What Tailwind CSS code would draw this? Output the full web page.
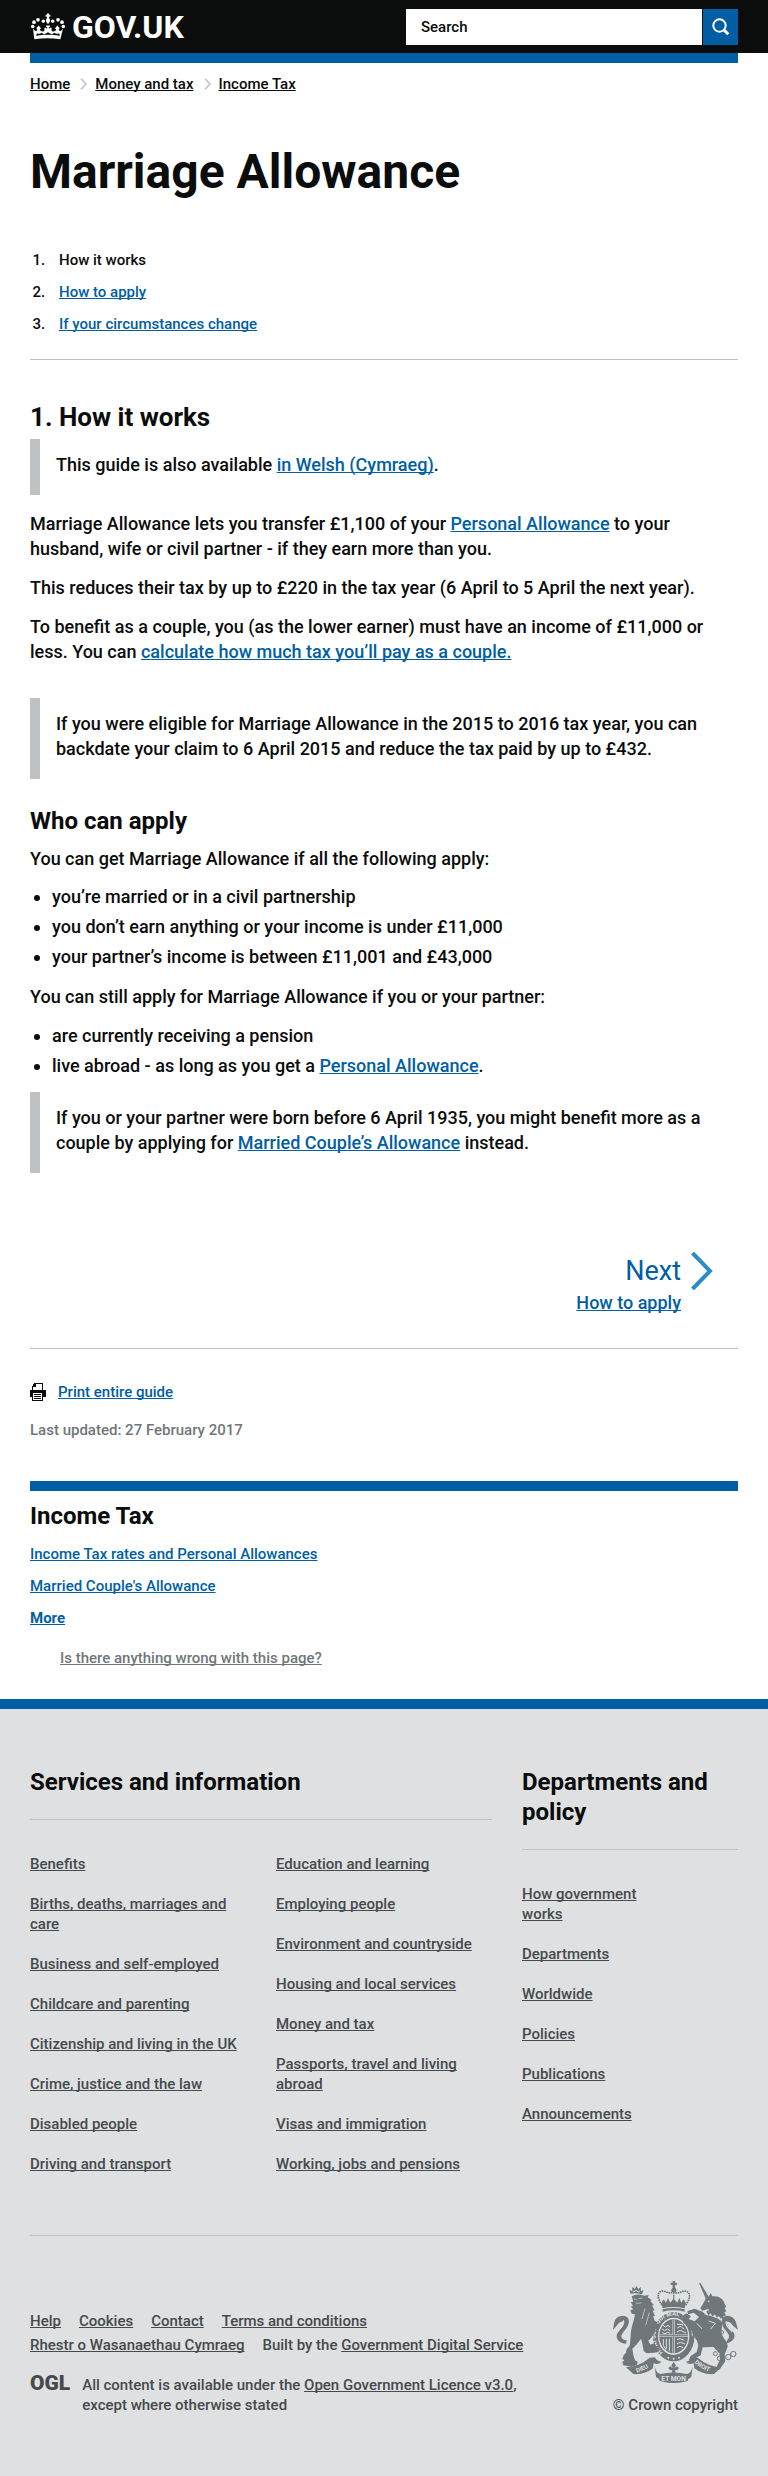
<!DOCTYPE html>
<html lang="en">
<head>
<meta charset="utf-8">
<meta name="viewport" content="width=device-width, initial-scale=1">
<title>Marriage Allowance - GOV.UK</title>
<script src="https://cdn.jsdelivr.net/npm/@tailwindcss/browser@4"></script>
</head>
<body class="bg-white font-['Roboto',sans-serif] text-[15px] font-medium leading-5 text-[#0b0c0c] [text-decoration-skip-ink:none]">

<header>
  <div class="bg-[#0b0c0c]">
    <div class="flex h-[53px] items-center justify-between px-[30px]">
      <a href="#" class="flex items-center gap-[6px] text-white" aria-label="GOV.UK home">
        <svg class="h-[27px] w-9" viewBox="90 36 108 80" fill="#fff" aria-hidden="true">
          <path d="M141 37h6v4h4v6h-4v4c4 3 4 8 1 12l-1 4h-6l-1-4c-3-4-3-9 1-12v-4h-4v-6h4z"/>
          <circle cx="130" cy="60" r="5"/><circle cx="158" cy="60" r="5"/>
          <circle cx="114" cy="56" r="5.500"/><circle cx="174" cy="56" r="5.500"/>
          <circle cx="102" cy="63" r="5.500"/><circle cx="186" cy="63" r="5.500"/>
          <circle cx="98" cy="76" r="5.500"/><circle cx="190" cy="76" r="5.500"/>
          <path fill-rule="evenodd" d="M99 82c7 9 10 10 13 4l-3-5 7-8 7 8-4 5c4 6 12 6 15 1-2-4-1-7 2-8l5 4 1-4-4-3v-3h12v3l-4 3 1 4 5-4c3 1 4 4 2 8 3 5 11 5 15-1l-4-5 7-8 7 8-3 5c3 6 6 5 13-4l-8 32q-39-5-78 0zM111 96l-3 8q36-6 72 0l-3-8q-7 4-14-1l-7 5-12-7-12 7-7-5q-7 5-14 1z"/>
        </svg>
        <span class="text-[32px] font-bold leading-none">GOV.UK</span>
      </a>
      <form class="flex h-9 w-[332px] gap-px" role="search">
        <input type="search" aria-label="Search" placeholder="Search" class="min-w-0 flex-1 bg-white pl-[15px] text-[15px] text-[#0b0c0c] placeholder:text-[#0b0c0c] placeholder:opacity-100">
        <button type="submit" aria-label="Search" class="flex w-[35px] items-center justify-center bg-[#005ea5]">
          <svg class="size-[18px]" viewBox="0 0 18 18" fill="none" stroke="#fff" aria-hidden="true"><circle cx="7.500" cy="7.500" r="6.200" stroke-width="2"/><path d="M11.500 11.500l4.800 4.800" stroke-width="3"/></svg>
        </button>
      </form>
    </div>
  </div>
  <div class="mx-[30px] h-[10px] bg-[#005ea5]"></div>
</header>

<main class="px-[30px]">
  <nav aria-label="Breadcrumb" class="mt-[11px]">
    <ol class="flex items-center gap-[9px]">
      <li><a href="#" class="underline">Home</a></li>
      <li class="flex items-center gap-[7px]"><svg class="mx-px h-3 w-[7px]" viewBox="0 0 7 12" fill="none" stroke="#bfc1c3" stroke-width="1.500" aria-hidden="true"><path d="M1 .7l5 5.300-5 5.300"/></svg><a href="#" class="underline">Money and tax</a></li>
      <li class="flex items-center gap-[7px]"><svg class="mx-px h-3 w-[7px]" viewBox="0 0 7 12" fill="none" stroke="#bfc1c3" stroke-width="1.500" aria-hidden="true"><path d="M1 .7l5 5.300-5 5.300"/></svg><a href="#" class="underline">Income Tax</a></li>
    </ol>
  </nav>

  <h1 class="mt-[53px] text-5xl font-bold leading-[50px]">Marriage Allowance</h1>

  <ol class="mt-[53px] flex list-decimal flex-col gap-3 border-b border-[#bfc1c3] pb-[25px] pl-[19px]">
    <li class="pl-[10px]">How it works</li>
    <li class="pl-[10px]"><a href="#" class="text-[#005ea5] underline">How to apply</a></li>
    <li class="pl-[10px]"><a href="#" class="text-[#005ea5] underline">If your circumstances change</a></li>
  </ol>

  <article class="text-lg leading-[25px]">
    <h2 class="mt-[42px] text-[26px] font-bold leading-[30px]">1. How it works</h2>
    <div class="mt-[7px] border-l-[10px] border-[#bfc1c3] pb-[18px] pl-4 pt-[13px]">
      <p>This guide is also available <a href="#" class="text-[#005ea5] underline">in Welsh (Cymraeg)</a>.</p>
    </div>
    <p class="mt-4">Marriage Allowance lets you transfer £1,100 of your <a href="#" class="text-[#005ea5] underline">Personal Allowance</a> to your husband, wife or civil partner - if they earn more than you.</p>
    <p class="mt-[14px]">This reduces their tax by up to £220 in the tax year (6 April to 5 April the next year).</p>
    <p class="mt-[14px]">To benefit as a couple, you (as the lower earner) must have an income of £11,000 or less. You can <a href="#" class="text-[#005ea5] underline">calculate how much tax you’ll pay as a couple.</a></p>
    <div class="mt-[34px] border-l-[10px] border-[#bfc1c3] pb-[18px] pl-4 pt-[13px]">
      <p>If you were eligible for Marriage Allowance in the 2015 to 2016 tax year, you can backdate your claim to 6 April 2015 and reduce the tax paid by up to £432.</p>
    </div>
    <h2 class="mt-[27px] text-2xl font-bold leading-[30px]">Who can apply</h2>
    <p class="mt-[10px]">You can get Marriage Allowance if all the following apply:</p>
    <ul class="mt-[13px] flex list-disc flex-col gap-[5px] pl-[22px]">
      <li>you’re married or in a civil partnership</li>
      <li>you don’t earn anything or your income is under £11,000</li>
      <li>your partner’s income is between £11,001 and £43,000</li>
    </ul>
    <p class="mt-[15px]">You can still apply for Marriage Allowance if you or your partner:</p>
    <ul class="mt-[14px] flex list-disc flex-col gap-[5px] pl-[22px]">
      <li>are currently receiving a pension</li>
      <li>live abroad - as long as you get a <a href="#" class="text-[#005ea5] underline">Personal Allowance</a>.</li>
    </ul>
    <div class="mt-[14px] border-l-[10px] border-[#bfc1c3] pb-[18px] pl-4 pt-[13px]">
      <p>If you or your partner were born before 6 April 1935, you might benefit more as a couple by applying for <a href="#" class="text-[#005ea5] underline">Married Couple’s Allowance</a> instead.</p>
    </div>
  </article>

  <nav aria-label="Pagination" class="mt-[79px] flex justify-end border-b border-[#bfc1c3] pb-[33px] pr-[25px]">
    <a href="#" class="flex items-start gap-[10px] text-[#005ea5]">
      <span class="flex flex-col gap-1 pt-1 text-right">
        <span class="text-[27px] font-normal leading-[30px]">Next</span>
        <span class="text-lg leading-[25px] underline">How to apply</span>
      </span>
      <svg class="h-[38px] w-[22px]" viewBox="0 0 22 38" fill="none" stroke="#2b8cc4" stroke-width="4" aria-hidden="true"><path d="M1.500 1l17.500 18L1.500 37"/></svg>
    </a>
  </nav>

  <div class="mt-[33px] flex items-center gap-3">
    <svg class="h-[18px] w-4" viewBox="0 0 16 18" aria-hidden="true" shape-rendering="crispEdges">
      <path fill="#0b0c0c" d="M4 0h9v7h3v7h-3v4H2v-4H0V7h2V3h1V1h1z"/>
      <path fill="#fff" d="M6 1h6v6H3V4h3zM3 10h9v7H3z"/>
      <path fill="#0b0c0c" d="M4 11h7v1H4zM4 13h7v1H4zM4 15h7v1H4z"/>
    </svg>
    <a href="#" class="text-[#005ea5] underline">Print entire guide</a>
  </div>
  <p class="mt-[18px] text-[#6f777b]">Last updated: 27 February 2017</p>

  <aside class="mt-[41px] border-t-[10px] border-[#005ea5] pt-[10px]">
    <h2 class="text-2xl font-bold leading-[30px]">Income Tax</h2>
    <ul class="mt-[13px] flex flex-col gap-3 text-[#005ea5]">
      <li><a href="#" class="underline">Income Tax rates and Personal Allowances</a></li>
      <li><a href="#" class="underline">Married Couple's Allowance</a></li>
      <li><a href="#" class="font-bold underline">More</a></li>
    </ul>
  </aside>
  <p class="mt-5 pl-[30px]"><a href="#" class="text-[#6f777b] underline">Is there anything wrong with this page?</a></p>
</main>

<footer class="mt-[31px] border-t-[10px] border-[#005ea5] bg-[#dee0e2] px-[30px] pb-[61px] pt-[58px] text-[#454a4c]">
  <div class="grid grid-cols-3 gap-x-[30px] border-b border-[#bfc1c3] pb-[61px]">
    <section class="col-span-2">
      <h2 class="border-b border-[#bfc1c3] pb-[22px] text-2xl font-bold leading-[30px] text-[#0b0c0c]">Services and information</h2>
      <div class="mt-[34px] grid grid-cols-2 gap-x-[30px]">
        <ul class="flex flex-col gap-5">
          <li><a href="#" class="underline">Benefits</a></li>
          <li><a href="#" class="underline">Births, deaths, marriages and care</a></li>
          <li><a href="#" class="underline">Business and self-employed</a></li>
          <li><a href="#" class="underline">Childcare and parenting</a></li>
          <li><a href="#" class="whitespace-nowrap underline">Citizenship and living in the UK</a></li>
          <li><a href="#" class="underline">Crime, justice and the law</a></li>
          <li><a href="#" class="underline">Disabled people</a></li>
          <li><a href="#" class="underline">Driving and transport</a></li>
        </ul>
        <ul class="flex flex-col gap-5">
          <li><a href="#" class="underline">Education and learning</a></li>
          <li><a href="#" class="underline">Employing people</a></li>
          <li><a href="#" class="underline">Environment and countryside</a></li>
          <li><a href="#" class="underline">Housing and local services</a></li>
          <li><a href="#" class="underline">Money and tax</a></li>
          <li><a href="#" class="underline">Passports, travel and living abroad</a></li>
          <li><a href="#" class="underline">Visas and immigration</a></li>
          <li><a href="#" class="underline">Working, jobs and pensions</a></li>
        </ul>
      </div>
    </section>
    <section>
      <h2 class="border-b border-[#bfc1c3] pb-[22px] text-2xl font-bold leading-[30px] text-[#0b0c0c]">Departments and policy</h2>
      <ul class="mt-[34px] flex w-2/3 flex-col gap-5">
        <li><a href="#" class="underline">How government works</a></li>
        <li><a href="#" class="underline">Departments</a></li>
        <li><a href="#" class="underline">Worldwide</a></li>
        <li><a href="#" class="underline">Policies</a></li>
        <li><a href="#" class="underline">Publications</a></li>
        <li><a href="#" class="underline">Announcements</a></li>
      </ul>
    </section>
  </div>

  <div class="mt-[45px] flex items-end justify-between">
    <div>
      <ul class="flex max-w-[530px] flex-wrap gap-x-[18px] gap-y-1">
        <li><a href="#" class="underline">Help</a></li>
        <li><a href="#" class="underline">Cookies</a></li>
        <li><a href="#" class="underline">Contact</a></li>
        <li><a href="#" class="underline">Terms and conditions</a></li>
        <li><a href="#" class="underline">Rhestr o Wasanaethau Cymraeg</a></li>
        <li>Built by the <a href="#" class="underline">Government Digital Service</a></li>
      </ul>
      <div class="mt-5 flex gap-3">
        <a href="#" class="text-[21px] font-black leading-[17px]">OGL</a>
        <p class="max-w-[460px]">All content is available under the <a href="#" class="underline">Open Government Licence v3.0</a>, except where otherwise stated</p>
      </div>
    </div>
    <a href="#" class="flex flex-col items-end gap-3">
      <svg class="h-[102px] w-[125px]" viewBox="39 33 375 306" fill="#6f777b" aria-hidden="true">
        <!-- imperial crown -->
        <path d="M218 33h7v5h6v7h-6v8c5 4 6 9 2 13h-11c-4-4-3-9 2-13v-8h-6v-7h6z"/>
        <g fill="none" stroke="#6f777b" stroke-width="5" stroke-dasharray="5 2">
          <path d="M186 105C163 74 178 56 199 66q11 5 22 0 11 5 22 0c22-10 37 9 14 39"/>
          <path d="M221 68v32" stroke-width="4"/>
        </g>
        <path d="M184 100l7-12 7 10 6-14 6 14 11-12 11 12 6-14 6 14 7-10 7 12-4 15q-33-8-66 0z"/>
        <path d="M188 118q33-8 66 0v7q-33-8-66 0z"/>
        <!-- garter and shield -->
        <ellipse cx="221" cy="200" rx="62" ry="74"/>
        <ellipse cx="221" cy="199" rx="47" ry="56" fill="#dee0e2"/>
        <ellipse cx="221" cy="199" rx="43" ry="51"/>
        <path d="M221 149v99M178 197h86" stroke="#dee0e2" stroke-width="7"/>
        <path d="M221 149v99M178 197h86" stroke="#6f777b" stroke-width="3"/>
        <g fill="none" stroke="#dee0e2" stroke-width="3">
          <path d="M189 166l7 5 8-5 7 5M186 177l8 5 8-5 9 5M187 188l8 3 8-4 8 3M231 163h17v4M232 174l9-5 12 8M231 186l10-5 17 8M190 207v19l9 14M199 206v30M208 206v38M231 209l9-3 13 5M231 221l10-4 14 5M231 233l9-4 9 4"/>
        </g>
        <path id="garter-ring" d="M221 263C146 247 151 140 221 137C291 140 296 247 221 263" fill="none"/>
        <text fill="#dee0e2" font-family="Roboto, sans-serif" font-size="18" font-weight="700"><textPath href="#garter-ring" startOffset="36">HONI SOIT QUI MAL Y PENSE</textPath></text>
        <circle cx="205" cy="263" r="3" fill="#dee0e2"/><circle cx="221" cy="266" r="3" fill="#dee0e2"/><circle cx="237" cy="263" r="3" fill="#dee0e2"/>
        <!-- lion -->
        <path d="M92 71l-4-11 8 3 1-12 7 6 5-9 6 9 7-6 1 12 8-3-5 13q-17-5-34-2z"/>
        <path d="M96 61l5 5 7-5 7 5 6-5" fill="none" stroke="#dee0e2" stroke-width="3"/>
        <path d="M95 79q17-10 37-2l14-2-3 7 12 8-4 4 11 11-6 2 8 14-6 1 7 16-6 1 5 13 8 5-4 8 6 8-7 4c-5 14-10 26-22 35l6 12 13-5 5 11 9 4-4 12-12 2-22 2-9-7-4-23-4-14c-7 10-18 24-26 30l3 19 5 16 8 4-2 10-17 5-24-4-3-9 6-6-6-4 4-11 7-8c0-10 4-13 11-21l3-27c0-22 6-37 10-53l3-14-10-2-4-10 9-3-8-8 7-3-7-10 8-2z"/>
        <path d="M101 86l9 3M116 86l12-2M107 98q9 5 17 0M135 116l-9 31M148 128l-11 38" stroke="#dee0e2" stroke-width="2" fill="none"/>
        <path d="M78 221C61 221 44 208 52 190c6-12 22-20 17-35-13-2-15 12-30 24 5-18 0-40 30-42 24 2 20 25 9 39-10 13-20 22-9 32q5 3 11 3z"/>
        <path d="M70 151c7 16-13 22-18 35" fill="none" stroke="#dee0e2" stroke-width="4"/>
        <!-- unicorn -->
        <path d="M297 39l5 1 28 47-10 5z"/>
        <path d="M318 84l8-4 6-11 5 10c18-3 35 8 37 23l5 8-5 4 5 10-6 2 5 11-8 1 2 11q-22-16-48-20l2-12-12 3-8 2-5-8 8-12z"/>
        <circle cx="326" cy="94" r="2.500" fill="#dee0e2"/>
        <path d="M321 123l5 9 6-8 6 11 7-8 6 12 7-7 6 13" fill="none" stroke="#6f777b" stroke-width="5"/>
        <path d="M318 135q27 4 46 18c7 16-5 29 4 46 6 10 16 20 15 32l-9 22 2 21-18 25-8 2 2-16 8-16-2-19-18-19-32 1-6 24-20 11-8 8-8-4 6-13 18-12 5-19-4-15-10-14-9-23-22-17-4-19 13-9 14 9-7 8 18 7 13-13-16-13-17 5-2-10 22-7 24 10z"/>
        <path d="M326 153l20 7-15 18M290 160l16 16" fill="none" stroke="#dee0e2" stroke-width="3"/>
        <path d="M376 221C398 218 412 201 398 184c-8-11-19-16-17-29 12-1 16 13 33 24-6-19-4-37-30-42-25 2-20 26-11 39 10 12 21 23 9 34z"/>
        <path d="M379 154c-5 15 12 21 17 32" fill="none" stroke="#dee0e2" stroke-width="4"/>
        <g fill="none" stroke="#6f777b" stroke-width="3"><circle cx="346" cy="251" r="6"/><circle cx="359" cy="265" r="7"/><circle cx="385" cy="261" r="8"/><circle cx="400" cy="252" r="8"/><circle cx="304" cy="132" r="6"/><circle cx="298" cy="184" r="6"/><circle cx="366" cy="187" r="5"/></g>
        <!-- motto scroll -->
        <path d="M78 292q40-2 71-29l16-1q4 12 20 13-12 11-24 4l-2 16q-25 20-59 17z"/>
        <path d="M364 292q-40-2-71-29l-16-1q-4 12-20 13 12 11 24 4l2 16q25 20 59 17z"/>
        <path d="M164 288q4 22 17 24 40-9 80 0 13-2 17-24l-4 33-17 11q-36 12-72 0l-17-11z"/>
        <path d="M174 311q47 10 94 0l-5 22q-42 12-84 0z"/>
        <path d="M221 276l7 10-5 9 8-6 6 5-5 7-7-1 2 8h-12l2-8-7 1-5-7 6-5 8 6-5-9z"/>
        <g fill="#dee0e2" font-family="Roboto, sans-serif" font-weight="700" font-size="18">
          <text x="184" y="332" font-size="20">ET MON</text>
          <path id="scroll-left" d="M110 307Q139 301 160 280" fill="none"/><path id="scroll-right" d="M283 278Q306 300 340 308" fill="none"/>
          <text><textPath href="#scroll-left">DIEU</textPath></text>
          <text><textPath href="#scroll-right">DROIT</textPath></text>
        </g>
      </svg>
      <span>© Crown copyright</span>
    </a>
  </div>
</footer>
</body>
</html>
